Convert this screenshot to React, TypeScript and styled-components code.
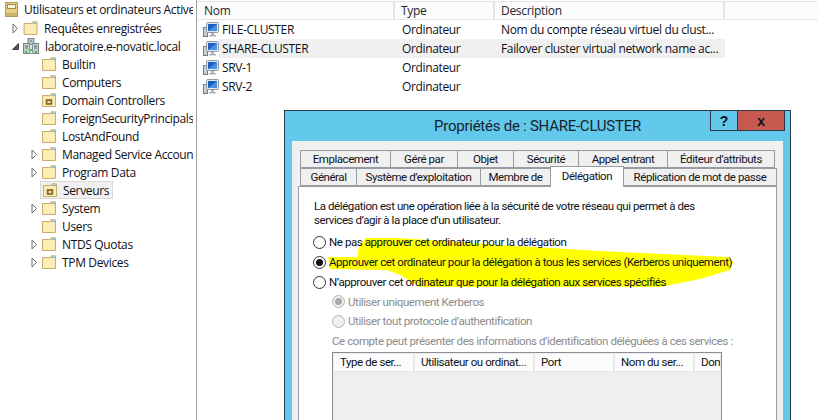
import styled, { createGlobalStyle } from 'styled-components';

const GlobalStyle = createGlobalStyle`
  html, body {
    margin: 0;
    padding: 0;
    background: #fff;
  }
  body {
    font-family: "Open Sans", "Noto Sans", sans-serif;
    font-size: 12px;
    color: #101018;
  }
`;

const Page = styled.div`
  position: relative;
  width: 818px;
  height: 420px;
  overflow: hidden;
  display: flex;
  background: #fff;
`;

/* left tree */
const TreePane = styled.div`
  width: 193px;
  flex: none;
  overflow: hidden;
  margin-right: 3px;
`;

const TreeRow = styled.div<{ $level: number; $title?: boolean }>`
  display: flex;
  align-items: center;
  height: ${(p) => (p.$title ? 19 : 18)}px;
  padding-left: ${(p) => (p.$title ? 5 : 8 + p.$level * 19)}px;
  white-space: nowrap;
`;

const ExpanderSlot = styled.span`
  width: 15px;
  height: 18px;
  flex: none;
  display: flex;
  align-items: center;
  justify-content: center;
`;

const TreeIcon = styled.span`
  flex: none;
  display: flex;
  margin-right: 6px;
`;

const TreeLabel = styled.span`
  font-size: 12px;
  letter-spacing: -0.35px;
`;

const SelectedWrap = styled.span`
  display: flex;
  align-items: center;
  height: 18px;
  margin-left: -2px;
  padding: 0 3px 0 2px;
  background: #f0f0f0;
  border: 1px solid #d9d9d9;
  box-sizing: border-box;
`;

/* right list */
const ListPane = styled.div`
  flex: 1;
  border-left: 1px solid #a0a0a0;
  padding-top: 1px;
`;

const ListHeader = styled.div`
  display: flex;
  height: 17px;
  background: #fcfcfc;
  border-top: 1px solid #e5e5e5;
  border-bottom: 1px solid #e5e5e5;
`;

const HeaderCell = styled.div<{ $w: number; $pad: number }>`
  width: ${(p) => p.$w}px;
  box-sizing: border-box;
  padding-left: ${(p) => p.$pad}px;
  line-height: 17px;
  letter-spacing: -0.3px;
  border-right: 2px solid #e5e5e5;
  color: #1c2530;
`;

const ListRow = styled.div`
  display: flex;
  height: 19px;
  align-items: center;
  letter-spacing: -0.35px;
  white-space: nowrap;
`;

const NameCell = styled.div`
  width: 22px;
  flex: none;
  padding-left: 6px;
  box-sizing: border-box;
  display: flex;
`;

const RowBody = styled.div<{ $hot?: boolean }>`
  width: 506px;
  height: 19px;
  box-sizing: border-box;
  padding-left: 3px;
  display: flex;
  align-items: center;
  background: ${(p) => (p.$hot ? '#f0f0f0' : 'transparent')};
`;

const RowCell = styled.div<{ $w: number }>`
  width: ${(p) => p.$w}px;
  flex: none;
  overflow: hidden;
`;

/* dialog */
const Dialog = styled.div`
  position: absolute;
  left: 284px;
  top: 110px;
  width: 507px;
  height: 340px;
  box-sizing: border-box;
  border: 1px solid #2b3a44;
  background: #63c9ec;
  padding: 0 7px;
  font-family: Roboto, "Open Sans", sans-serif;
  font-size: 11.5px;
`;

const TitleBar = styled.div`
  position: relative;
  height: 30px;
  display: flex;
  align-items: center;
  justify-content: center;
  font-size: 15px;
  letter-spacing: -0.25px;
  color: #17232c;
`;

const WindowControls = styled.div`
  position: absolute;
  top: -1px;
  right: -2px;
  display: flex;
`;

const WindowButton = styled.div<{ $w: number; $close?: boolean }>`
  width: ${(p) => p.$w}px;
  height: 21px;
  box-sizing: border-box;
  border: 1px solid #2b3a44;
  margin-left: -1px;
  background: ${(p) => (p.$close ? '#c75a50' : 'transparent')};
  display: flex;
  align-items: center;
  justify-content: center;
  font-family: "Liberation Sans", sans-serif;
  font-size: 14px;
  font-weight: 700;
  line-height: 1;
  color: #111;
`;

const Client = styled.div`
  height: 300px;
  background: #f0f0f0;
  padding: 9px 6px 0;
`;

const TabRow = styled.div`
  display: flex;
  height: 18px;
  padding-left: 2px;
  position: relative;
  z-index: 2;
`;

const Tab = styled.div<{ $w: number; $active?: boolean }>`
  width: ${(p) => p.$w}px;
  flex: none;
  box-sizing: border-box;
  height: ${(p) => (p.$active ? 21 : 18)}px;
  margin-top: ${(p) => (p.$active ? -2 : 0)}px;
  background: ${(p) => (p.$active ? '#fff' : '#f0f0f0')};
  border: 1px solid #9a9aa2;
  border-bottom: ${(p) => (p.$active ? '0' : '1px solid #9a9aa2')};
  margin-right: -1px;
  text-align: center;
  line-height: ${(p) => (p.$active ? 18 : 17)}px;
  letter-spacing: -0.44px;
  white-space: nowrap;
  position: relative;
  z-index: ${(p) => (p.$active ? 3 : 1)};
`;

const TabPanel = styled.div`
  position: relative;
  background: #fff;
  border: 1px solid #9a9aa2;
  height: 260px;
  padding: 12px 15px 0;
`;

const Highlight = styled.svg`
  position: absolute;
  left: 21px;
  top: 45px;
`;

const PanelBody = styled.div`
  position: relative;
  letter-spacing: -0.42px;
  white-space: nowrap;
`;

const Intro = styled.div`
  line-height: 14px;
  margin-bottom: 5px;
`;

const OptionRow = styled.div<{ $sub?: boolean; $disabled?: boolean }>`
  display: flex;
  align-items: center;
  height: ${(p) => (p.$sub ? 19.5 : 20)}px;
  padding-left: ${(p) => (p.$sub ? 19 : 0)}px;
  margin-left: -1px;
  color: ${(p) => (p.$disabled ? '#8c8c8c' : '#101018')};
`;

const Radio = styled.span<{ $checked?: boolean; $disabled?: boolean }>`
  width: 13px;
  height: 13px;
  flex: none;
  box-sizing: border-box;
  border-radius: 50%;
  border: 1px solid ${(p) => (p.$disabled ? '#b4b4b4' : '#333')};
  background: ${(p) => (p.$disabled ? '#f0f0f0' : '#fff')};
  margin-right: 3px;
  display: flex;
  align-items: center;
  justify-content: center;

  &::after {
    content: '';
    display: ${(p) => (p.$checked ? 'block' : 'none')};
    width: 7px;
    height: 7px;
    border-radius: 50%;
    background: ${(p) => (p.$disabled ? '#a8a8a8' : '#111')};
  }
`;

const Note = styled.div`
  margin: 3px 0 0 18px;
  height: 14px;
  line-height: 14px;
  color: #8c8c8c;
`;

const ListBox = styled.div`
  margin: 4px 0 0 18px;
  width: 390px;
  height: 100px;
  box-sizing: border-box;
  background: #efefef;
  border: 1px solid #8c8c96;
  overflow: hidden;
`;

const BoxHeader = styled.div`
  display: flex;
  height: 17px;
  background: #fcfcfc;
  border-bottom: 1px solid #e5e5e5;
  margin: 1px 0 0 1px;
`;

const BoxCell = styled.div<{ $w: number }>`
  width: ${(p) => p.$w}px;
  flex: none;
  box-sizing: border-box;
  padding-left: 6px;
  border-right: 2px solid #e8e8e8;
  line-height: 16px;
  overflow: hidden;
`;

/* drawings */
const Triangle = ({ open }: { open?: boolean }) =>
  open ? (
    <svg width="9" height="9" viewBox="0 0 9 9">
      <path d="M7.5 1.5V7.5H1.5Z" fill="#595959" stroke="#404040" />
    </svg>
  ) : (
    <svg width="7" height="11" viewBox="0 0 7 11">
      <path d="M1 1L5.5 5.5L1 10Z" fill="#fff" stroke="#6e6e6e" />
    </svg>
  );

const Folder = ({ locked, large }: { locked?: boolean; large?: boolean }) => (
  <svg width={large ? 15 : 14} height="14" viewBox="0 0 14 14">
    <path d="M.5 2.5H8L9 .8H13.5V13.5H.5Z" fill="#fbe7a8" stroke="#c9ad6c" />
    <path d="M1.5 4H12.5V12.5H1.5Z" fill="#fdeeb9" />
    <path d="M9.5 1.5H13V3H9Z" fill="#7fb9e6" />
    {locked && <rect x="4" y="6.5" width="6" height="5" fill="#8a7430" stroke="#6a5a22" strokeWidth=".5" />}
    {locked && <rect x="5.5" y="8" width="3" height="2" fill="#e9dc9a" />}
  </svg>
);

const ConsoleIcon = () => (
  <svg width="13" height="15" viewBox="0 0 13 15">
    <rect x=".5" y=".5" width="12" height="14" fill="#e6cf86" stroke="#b09a58" />
    <rect x="2.5" y="2.5" width="8" height="4" fill="#fbf6dc" stroke="#9c8a50" />
    <rect x="1" y="11" width="11" height="3" fill="#cdb468" />
  </svg>
);

const DomainIcon = () => (
  <svg width="16" height="16" viewBox="0 0 16 16">
    <rect x="5" y=".5" width="6" height="7" fill="#b9c6c6" stroke="#76848a" />
    <rect x=".5" y="5.5" width="6" height="10" fill="#c3cfcf" stroke="#76848a" />
    <rect x="9.5" y="5.5" width="6" height="10" fill="#c3cfcf" stroke="#76848a" />
    <rect x="6.5" y="6.5" width="3" height="9" fill="#dfe6e6" stroke="#8b989c" />
    <path d="M2 8H5M2 10H5M11 8H14M11 10H14M7 3H9" stroke="#5f6f78" />
    <rect x="2" y="13" width="2" height="2" fill="#42c742" />
    <rect x="12" y="13" width="2" height="2" fill="#42c742" />
    <rect x="7" y="11" width="2" height="2" fill="#42c742" />
  </svg>
);

const ComputerIcon = () => (
  <svg width="16" height="16" viewBox="0 0 16 16">
    <rect x=".5" y="5.5" width="4" height="9" fill="#c9d2d4" stroke="#6f7f86" />
    <rect x="1.5" y="12" width="1.5" height="1.5" fill="#d8d040" />
    <rect x="3.5" y=".5" width="12" height="10" rx="1" fill="#dfe7ee" stroke="#8d9ca8" />
    <rect x="5" y="2" width="9" height="7" fill="#1e5fc0" />
    <path d="M5 9L14 2V9Z" fill="#4a90e0" />
    <path d="M8 11H11V13H13V14.5H6V13H8Z" fill="#aab6bc" />
  </svg>
);

const treeItems = [
  { label: 'Builtin' },
  { label: 'Computers' },
  { label: 'Domain Controllers', locked: true },
  { label: 'ForeignSecurityPrincipals' },
  { label: 'LostAndFound' },
  { label: 'Managed Service Accounts', expander: true },
  { label: 'Program Data', expander: true },
  { label: 'Serveurs', locked: true, selected: true },
  { label: 'System', expander: true },
  { label: 'Users' },
  { label: 'NTDS Quotas', expander: true },
  { label: 'TPM Devices', expander: true },
];

const computers = [
  { name: 'FILE-CLUSTER', description: 'Nom du compte réseau virtuel du clust...' },
  { name: 'SHARE-CLUSTER', description: 'Failover cluster virtual network name ac...', hot: true },
  { name: 'SRV-1', description: '' },
  { name: 'SRV-2', description: '' },
];

const topTabs = [
  { label: 'Emplacement', w: 91 },
  { label: 'Géré par', w: 68 },
  { label: 'Objet', w: 57 },
  { label: 'Sécurité', w: 66 },
  { label: 'Appel entrant', w: 90 },
  { label: 'Éditeur d’attributs', w: 108 },
];

const bottomTabs = [
  { label: 'Général', w: 57 },
  { label: 'Système d’exploitation', w: 125 },
  { label: 'Membre de', w: 71 },
  { label: 'Délégation', w: 74, active: true },
  { label: 'Réplication de mot de passe', w: 154 },
];

const boxColumns = [
  { label: 'Type de ser...', w: 81 },
  { label: 'Utilisateur ou ordinat...', w: 120 },
  { label: 'Port', w: 80 },
  { label: 'Nom du ser...', w: 80 },
  { label: 'Dom', w: 27 },
];

export default function App() {
  return (
    <Page>
      <GlobalStyle />
      <TreePane>
        <TreeRow $level={0} $title>
          <TreeIcon><ConsoleIcon /></TreeIcon>
          <TreeLabel>Utilisateurs et ordinateurs Active Directory</TreeLabel>
        </TreeRow>
        <TreeRow $level={0}>
          <ExpanderSlot><Triangle /></ExpanderSlot>
          <TreeIcon><Folder large /></TreeIcon>
          <TreeLabel>Requêtes enregistrées</TreeLabel>
        </TreeRow>
        <TreeRow $level={0}>
          <ExpanderSlot><Triangle open /></ExpanderSlot>
          <TreeIcon><DomainIcon /></TreeIcon>
          <TreeLabel>laboratoire.e-novatic.local</TreeLabel>
        </TreeRow>
        {treeItems.map((item) => (
          <TreeRow key={item.label} $level={1}>
            <ExpanderSlot>{item.expander && <Triangle />}</ExpanderSlot>
            {item.selected ? (
              <SelectedWrap>
                <TreeIcon><Folder locked /></TreeIcon>
                <TreeLabel>{item.label}</TreeLabel>
              </SelectedWrap>
            ) : (
              <>
                <TreeIcon><Folder locked={item.locked} /></TreeIcon>
                <TreeLabel>{item.label}</TreeLabel>
              </>
            )}
          </TreeRow>
        ))}
      </TreePane>

      <ListPane>
        <ListHeader>
          <HeaderCell $w={198} $pad={7}>Nom</HeaderCell>
          <HeaderCell $w={100} $pad={6}>Type</HeaderCell>
          <HeaderCell $w={230} $pad={6}>Description</HeaderCell>
        </ListHeader>
        {computers.map((c) => (
          <ListRow key={c.name}>
            <NameCell><ComputerIcon /></NameCell>
            <RowBody $hot={c.hot}>
              <RowCell $w={180}>{c.name}</RowCell>
              <RowCell $w={99}>Ordinateur</RowCell>
              <RowCell $w={224}>{c.description}</RowCell>
            </RowBody>
          </ListRow>
        ))}
      </ListPane>

      <Dialog>
        <TitleBar>
          Propriétés de : SHARE-CLUSTER
          <WindowControls>
            <WindowButton $w={28}>?</WindowButton>
            <WindowButton $w={48} $close>x</WindowButton>
          </WindowControls>
        </TitleBar>
        <Client>
          <TabRow>
            {topTabs.map((t) => (
              <Tab key={t.label} $w={t.w}>{t.label}</Tab>
            ))}
          </TabRow>
          <TabRow>
            {bottomTabs.map((t) => (
              <Tab key={t.label} $w={t.w} $active={t.active}>{t.label}</Tab>
            ))}
          </TabRow>
          <TabPanel>
            <Highlight width="420" height="60" viewBox="320 232 420 60">
              <path
                d="M366 238L400 238L500 245L600 251L728 257L733 262L730 270L700 279L660 287L420 287L400 275L387 270L330 269L328 257L358 257L358 251L360 245Z"
                fill="#ffff00"
              />
            </Highlight>
            <PanelBody>
              <Intro>
                La délégation est une opération liée à la sécurité de votre réseau qui permet à des
                <br />
                services d’agir à la place d’un utilisateur.
              </Intro>
              <OptionRow>
                <Radio />
                Ne pas approuver cet ordinateur pour la délégation
              </OptionRow>
              <OptionRow>
                <Radio $checked />
                Approuver cet ordinateur pour la délégation à tous les services (Kerberos uniquement)
              </OptionRow>
              <OptionRow>
                <Radio />
                N’approuver cet ordinateur que pour la délégation aux services spécifiés
              </OptionRow>
              <OptionRow $sub $disabled>
                <Radio $checked $disabled />
                Utiliser uniquement Kerberos
              </OptionRow>
              <OptionRow $sub $disabled>
                <Radio $disabled />
                Utiliser tout protocole d’authentification
              </OptionRow>
              <Note>Ce compte peut présenter des informations d’identification déléguées à ces services :</Note>
              <ListBox>
                <BoxHeader>
                  {boxColumns.map((c) => (
                    <BoxCell key={c.label} $w={c.w}>{c.label}</BoxCell>
                  ))}
                </BoxHeader>
              </ListBox>
            </PanelBody>
          </TabPanel>
        </Client>
      </Dialog>
    </Page>
  );
}
